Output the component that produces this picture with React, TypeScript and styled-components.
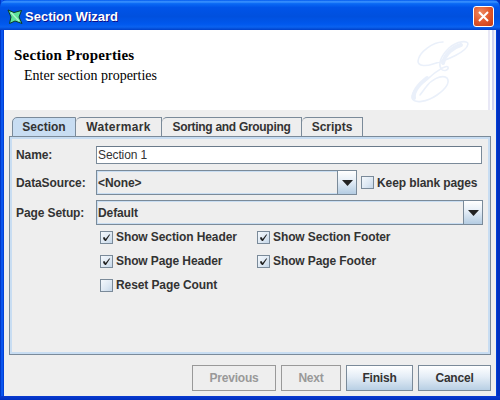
import React from "react";
import styled, { createGlobalStyle } from "styled-components";

const Global = createGlobalStyle`
  html, body { margin: 0; padding: 0; background: #eee; }
  * { box-sizing: border-box; }
`;

const Window = styled.div`
  width: 500px;
  height: 400px;
  display: flex;
  flex-direction: column;
  overflow: hidden;
  background:
    linear-gradient(180deg, transparent 396px, #0a3ad0 396px, #0030c0 400px),
    linear-gradient(90deg, #0038c8 0, #0038c8 1px, #0a55ee 1px, #0a55ee 3px, #0040d8 3px, #0040d8 497px, #0030c0 497px);
  font-family: "Liberation Sans", Arial, sans-serif;
`;

const TitleBar = styled.div`
  height: 30px;
  flex: none;
  display: flex;
  align-items: center;
  padding: 3px 6px 0 7px;
  border-radius: 7px 7px 0 0;
  background: linear-gradient(180deg, #0058ee 0%, #3d95ff 6%, #0a6af5 12%, #0054e8 25%, #0050de 55%, #0058ee 80%, #0a62f0 90%, #0040c8 100%);
`;

const TitleText = styled.span`
  margin-left: 2px;
  flex: 1;
  font-family: "Liberation Sans", Arial, sans-serif;
  font-weight: 700;
  font-size: 13px;
  color: #fff;
  text-shadow: 1px 1px 0 #0f1089;
`;

const CloseButton = styled.div`
  width: 21px;
  height: 21px;
  display: flex;
  align-items: center;
  justify-content: center;
  border: 1px solid #fff;
  border-radius: 3px;
  background: radial-gradient(circle at 35% 30%, #ee8a62 0%, #e2582c 50%, #c43a14 100%);
`;

const Frame = styled.div`
  flex: 1;
  min-height: 0;
  margin: 0 4px 4px 4px;
  display: flex;
  flex-direction: column;
  background: #eee;
`;

const Banner = styled.div`
  height: 80px;
  flex: none;
  display: flex;
  background: linear-gradient(90deg, #fff 0, #fff 484px, #e8e8f6 484px, #e8e8f6 486px, #fff 486px, #fff 488px, #d0d4f0 488px, #d0d4f0 490px, #eef0fa 490px);
`;

const BannerText = styled.div`
  flex: 1;
  padding: 17px 0 0 10px;
  font-family: "Liberation Serif", "Times New Roman", serif;
  color: #000;
`;

const BannerTitle = styled.div`
  font-weight: 700;
  font-size: 15px;
  letter-spacing: 0.2px;
  line-height: 17px;
`;

const BannerSub = styled.div`
  margin-top: 4px;
  padding-left: 10px;
  font-size: 14px;
  line-height: 16px;
`;

const Watermark = styled.svg`
  flex: none;
  width: 80px;
  height: 80px;
  margin-right: 11px;
`;

const Body = styled.div`
  flex: 1;
  min-height: 0;
  display: flex;
  flex-direction: column;
  padding: 7px 5px 5px 5px;
`;

const TabStrip = styled.div`
  height: 19px;
  flex: none;
  display: flex;
  padding-left: 3px;
`;

const Tab = styled.div<{ $w: number; $active?: boolean; $ls?: number }>`
  width: ${(p) => p.$w}px;
  height: ${(p) => (p.$active ? 20 : 19)}px;
  display: flex;
  align-items: center;
  justify-content: center;
  font-size: 12px;
  font-weight: 700;
  letter-spacing: ${(p) => p.$ls ?? 0}px;
  color: #333;
  background: ${(p) => (p.$active ? "#c8ddf2" : "#eee")};
  border: 1px solid #7a8a99;
  border-left-width: ${(p) => (p.$active ? 1 : 0)}px;
  border-bottom-width: ${(p) => (p.$active ? 1 : 0)}px;
  border-top-left-radius: 5px;
  position: relative;
  z-index: ${(p) => (p.$active ? 2 : 1)};
`;

const Panel = styled.div`
  flex: 1;
  min-height: 0;
  border: 1px solid #7a8a99;
  box-shadow: inset 0 0 0 2px #c8ddf2;
  padding: 9px 8px 0 6px;
  display: flex;
  flex-direction: column;
  letter-spacing: -0.1px;
`;

const FormRow = styled.div<{ $h: number; $mt: number }>`
  height: ${(p) => p.$h}px;
  margin-top: ${(p) => p.$mt}px;
  flex: none;
  display: flex;
  align-items: center;
`;

const FieldLabel = styled.span`
  width: 80px;
  flex: none;
  font-size: 12px;
  font-weight: 700;
  color: #333;
`;

const TextField = styled.div`
  flex: 1;
  height: 100%;
  background: #fff;
  border: 1px solid #7a8a99;
  border-top-color: #6a7a8a;
  padding-left: 1px;
  display: flex;
  align-items: center;
  font-size: 12px;
  color: #333;
`;

const Combo = styled.div<{ $w?: number }>`
  ${(p) => (p.$w ? `width: ${p.$w}px; flex: none;` : "flex: 1; margin-right: -1px;")}
  height: 100%;
  display: flex;
  background: #eee;
  border: 1px solid #7a8a99;
  box-shadow: inset 0 0 0 1px #c8ddf2;
`;

const ComboValue = styled.div`
  flex: 1;
  padding-left: 1px;
  display: flex;
  align-items: center;
  font-size: 12px;
  font-weight: 700;
  color: #333;
`;

const ComboArrow = styled.div`
  width: 19px;
  flex: none;
  display: flex;
  align-items: center;
  justify-content: center;
  border-left: 1px solid #7a8a99;
  background: linear-gradient(180deg, #fff 0%, #e4edf6 45%, #b4cce2 100%);
`;

const Box = styled.span`
  width: 13px;
  height: 13px;
  flex: none;
  display: inline-flex;
  align-items: center;
  justify-content: center;
  border: 1px solid #7a8a99;
  background: linear-gradient(135deg, #f4f8fc 0%, #dce7f2 60%, #c4d6e8 100%);
`;

const CheckLabel = styled.span`
  margin-left: 3px;
  font-size: 12px;
  font-weight: 700;
  color: #333;
  white-space: nowrap;
`;

const Check = styled.label`
  display: flex;
  align-items: center;
`;

const KeepCheck = styled(Check)`
  margin-left: 4px;
`;

const CheckGrid = styled.div`
  margin: 0 0 0 84px;
  display: grid;
  grid-template-columns: 157px auto;
  grid-auto-rows: 24px;
  align-items: center;
  justify-content: start;
`;

const Footer = styled.div`
  height: 36px;
  flex: none;
  display: flex;
  justify-content: flex-end;
  align-items: flex-end;
  gap: 5px;
`;

const Button = styled.div<{ $w: number; $disabled?: boolean }>`
  width: ${(p) => p.$w}px;
  height: 26px;
  display: flex;
  align-items: center;
  justify-content: center;
  font-size: 12px;
  font-weight: 700;
  letter-spacing: -0.2px;
  color: ${(p) => (p.$disabled ? "#999" : "#333")};
  border: 1px solid ${(p) => (p.$disabled ? "#999" : "#7a8a99")};
  background: ${(p) => (p.$disabled ? "#eee" : "linear-gradient(180deg, #fff 0%, #e4edf6 45%, #b8cfe4 100%)")};
`;

const Tick = () => (
  <svg width="9" height="9" viewBox="0 0 9 9">
    <path d="M1.2 4.2 L1.2 6 L3 8 L4 8 L8.2 1.5 L7.2 1.5 L3.6 6 L2.8 4.2 Z" fill="#222" />
  </svg>
);

const Arrow = () => (
  <svg width="11" height="6" viewBox="0 0 11 6">
    <path d="M0 0 H11 L5.5 6 Z" fill="#222" />
  </svg>
);

const CheckItem = ({ label, on }: { label: string; on?: boolean }) => (
  <Check>
    <Box>{on && <Tick />}</Box>
    <CheckLabel>{label}</CheckLabel>
  </Check>
);

export default function App() {
  return (
    <Window>
      <Global />
      <TitleBar>
        <svg width="16" height="16" viewBox="0 0 16 16">
          <path d="M1 1 L7 3.5 L14.5 1.5 L12 8 L15 14.5 L8 12 L2.5 14.5 L4 8 Z" fill="#5fe39a" stroke="#0b3a2a" strokeWidth="1" />
          <path d="M4 3.5 L12 12" stroke="#b6f5d0" strokeWidth="1.2" />
        </svg>
        <TitleText>Section Wizard</TitleText>
        <CloseButton>
          <svg width="13" height="13" viewBox="0 0 13 13">
            <path d="M2 2 L11 11 M11 2 L2 11" stroke="#fff" strokeWidth="2" />
          </svg>
        </CloseButton>
      </TitleBar>
      <Frame>
        <Banner>
          <BannerText>
            <BannerTitle>Section Properties</BannerTitle>
            <BannerSub>Enter section properties</BannerSub>
          </BannerText>
          <Watermark viewBox="0 0 80 80" fill="none" stroke="#eaf0fa" strokeLinecap="round">
            <path d="M38 12 C28 12 14 22 13 31 C13 37 22 36 28 34 C42 30 62 22 63 14 C63 10 52 11 44 18 C37 25 33 33 36 39 C39 42 44 40 43 37 C41 35 30 42 25 47 C14 55 6 62 7 68 C9 74 22 72 32 65 C42 58 45 52 42 48 C36 44 26 50 21 57 C18 61 16 64 15 65" strokeWidth="1.6" />
            <path d="M56 15 C48 17 40 24 38 33 M22 48 C13 55 8 62 9 68" strokeWidth="4" />
          </Watermark>
        </Banner>
        <Body>
          <TabStrip>
            <Tab $w={64} $active>Section</Tab>
            <Tab $w={86} $ls={0.3}>Watermark</Tab>
            <Tab $w={140} $ls={-0.3}>Sorting and Grouping</Tab>
            <Tab $w={61}>Scripts</Tab>
          </TabStrip>
          <Panel>
            <FormRow $h={18} $mt={0}>
              <FieldLabel>Name:</FieldLabel>
              <TextField>Section 1</TextField>
            </FormRow>
            <FormRow $h={25} $mt={6}>
              <FieldLabel>DataSource:</FieldLabel>
              <Combo $w={261}>
                <ComboValue>&lt;None&gt;</ComboValue>
                <ComboArrow><Arrow /></ComboArrow>
              </Combo>
              <KeepCheck>
                <Box />
                <CheckLabel>Keep blank pages</CheckLabel>
              </KeepCheck>
            </FormRow>
            <FormRow $h={25} $mt={5}>
              <FieldLabel>Page Setup:</FieldLabel>
              <Combo>
                <ComboValue>Default</ComboValue>
                <ComboArrow><Arrow /></ComboArrow>
              </Combo>
            </FormRow>
            <CheckGrid>
              <CheckItem label="Show Section Header" on />
              <CheckItem label="Show Section Footer" on />
              <CheckItem label="Show Page Header" on />
              <CheckItem label="Show Page Footer" on />
              <CheckItem label="Reset Page Count" />
            </CheckGrid>
          </Panel>
          <Footer>
            <Button $w={84} $disabled>Previous</Button>
            <Button $w={60} $disabled>Next</Button>
            <Button $w={67}>Finish</Button>
            <Button $w={73}>Cancel</Button>
          </Footer>
        </Body>
      </Frame>
    </Window>
  );
}
